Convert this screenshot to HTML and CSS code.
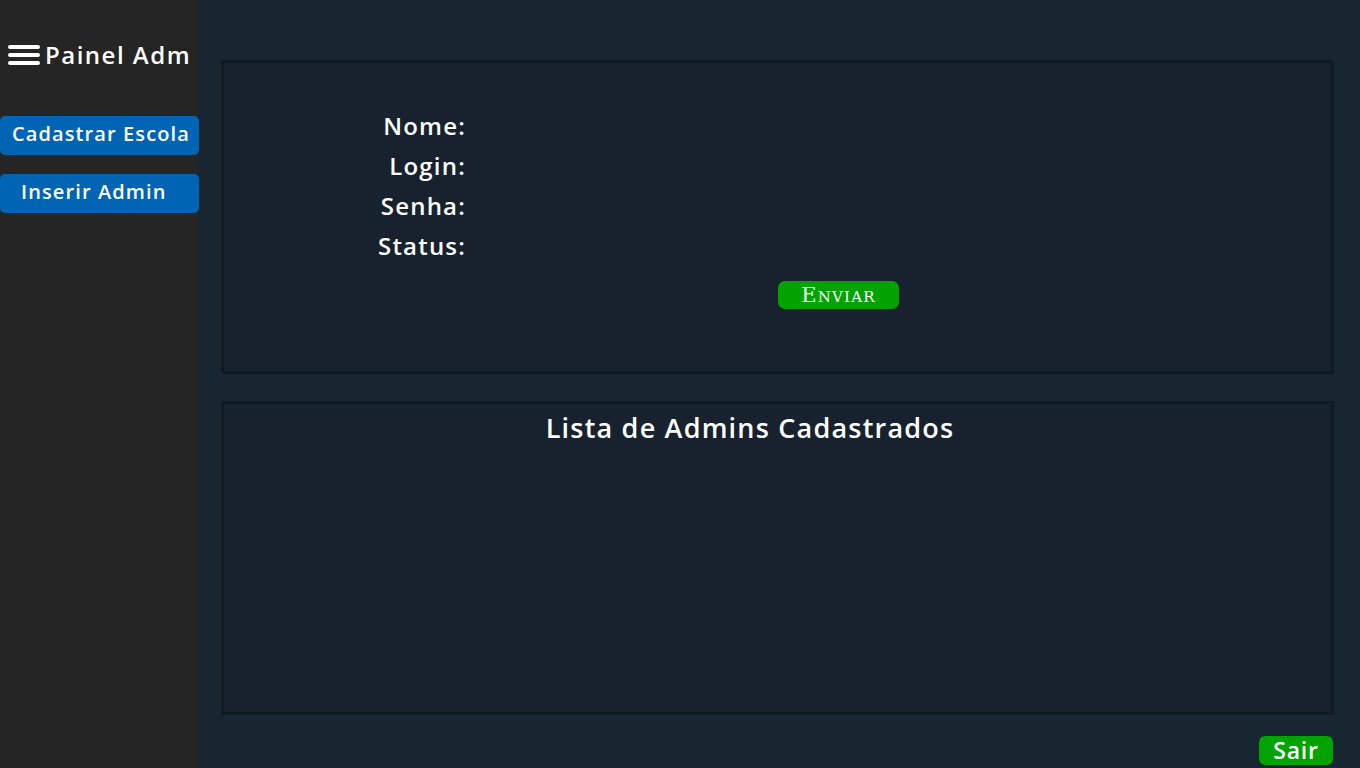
FILE: index.html
```html
<!DOCTYPE html>
<html lang="pt">
<head>
<meta charset="utf-8">
<title>Painel Adm</title>
<link rel="stylesheet" href="styles.css">
</head>
<body>
<div class="app">
  <aside class="sidebar">
    <div class="brand">
      <svg class="menu-icon" width="32" height="20" viewBox="0 0 32 20"><rect x="0" y="0" width="32" height="4" rx="2" fill="#fff"/><rect x="0" y="8" width="32" height="4" rx="2" fill="#fff"/><rect x="0" y="16" width="32" height="4" rx="2" fill="#fff"/></svg>
      <span class="brand-text">Painel Adm</span>
    </div>
    <nav class="nav">
      <a class="nav-btn nav-btn-a" href="#">Cadastrar Escola</a>
      <a class="nav-btn nav-btn-b" href="#">Inserir Admin</a>
    </nav>
  </aside>
  <main class="main">
    <section class="panel form-panel">
      <div class="fields">
        <div class="field"><label>Nome:</label></div>
        <div class="field"><label>Login:</label></div>
        <div class="field"><label>Senha:</label></div>
        <div class="field"><label>Status:</label></div>
      </div>
      <div class="actions"><button class="send-btn">Enviar</button></div>
    </section>
    <section class="panel list-panel">
      <h2 class="list-title">Lista de Admins Cadastrados</h2>
    </section>
    <div class="footer"><button class="exit-btn">Sair</button></div>
  </main>
</div>
</body>
</html>
```
FILE: styles.css
```css
* { box-sizing: border-box; }
html, body { margin: 0; padding: 0; height: 100%; }
body {
  background: #172630;
  font-family: "Open Sans", "DejaVu Sans", sans-serif;
  color: #fff;
}
.app { display: flex; height: 768px; }
.sidebar {
  width: 197px;
  flex: none;
  background: #252525;
  padding-top: 41px;
  position: relative;
  z-index: 1;
}
.brand {
  display: flex;
  align-items: center;
  gap: 5px;
  padding-left: 8px;
  height: 28px;
}
.brand-text {
  font-size: 24px;
  font-weight: 600;
  letter-spacing: 1.5px;
  margin-top: -2px;
}
.nav {
  display: flex;
  flex-direction: column;
  gap: 19px;
  margin-top: 47px;
}
.nav-btn {
  display: block;
  width: 199px;
  height: 39px;
  line-height: 35px;
  background: #0064b4;
  border-radius: 5px;
  color: #fff;
  text-decoration: none;
  font-size: 20px;
  font-weight: 600;
  letter-spacing: 1.1px;
}
.nav-btn-a { padding-left: 12px; }
.nav-btn-b { padding-left: 21px; }
.main {
  flex: 1;
  display: flex;
  flex-direction: column;
  padding: 60px 26px 0 24px;
}
.panel {
  border: 3px solid #0f1a22;
  border-radius: 3px;
  background: #17222e;
  height: 314px;
}
.form-panel {
  padding: 46px 0 0 0;
}
.fields {
  display: flex;
  flex-direction: column;
  width: 242px;
  align-items: flex-end;
}
.field {
  height: 40px;
  line-height: 34px;
}
.field label {
  font-size: 24px;
  font-weight: 600;
  letter-spacing: 1.2px;
}
.actions {
  display: flex;
  justify-content: center;
  margin-top: 12px;
  padding-left: 122px;
}
.send-btn {
  width: 121px;
  height: 28px;
  border: none;
  border-radius: 7px;
  background: #00a300;
  color: #fff;
  font-family: "DejaVu Serif", "Liberation Serif", serif;
  font-variant: small-caps;
  font-weight: normal;
  font-size: 21px;
  letter-spacing: 1.2px;
  line-height: 26px;
  padding: 0;
  cursor: pointer;
}
.list-panel {
  margin-top: 27px;
}
.list-title {
  margin: 6px 55px 0 0;
  text-align: center;
  font-size: 27px;
  font-weight: 600;
  letter-spacing: 1.2px;
  line-height: 36px;
}
.footer {
  display: flex;
  justify-content: flex-end;
  padding-top: 21px;
  margin-right: 1px;
}
.exit-btn {
  width: 74px;
  height: 29px;
  border: none;
  border-radius: 6px;
  background: #00a300;
  color: #fff;
  font-family: "Open Sans", "DejaVu Sans", sans-serif;
  font-size: 23px;
  font-weight: 600;
  letter-spacing: 0.8px;
  line-height: 25px;
  padding: 0;
  cursor: pointer;
}
```
